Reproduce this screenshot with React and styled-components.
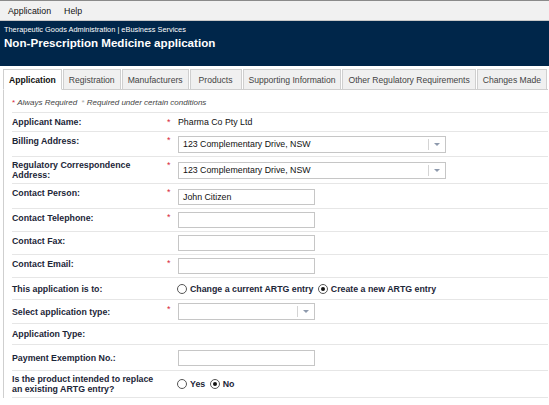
import React from 'react';
import styled, { createGlobalStyle } from 'styled-components';

const Global = createGlobalStyle`
  body {
    margin: 0;
    background: #fff;
    font-family: "Liberation Sans", Arial, sans-serif;
    font-size: 8.8px;
    color: #222;
  }
`

const MenuBar = styled.div`
  height: 19px;
  display: flex;
  align-items: center;
  gap: 13px;
  padding-left: 8px;
  background: #f1f1f1;
  border-top: 1px solid #8a8a8a;
  border-bottom: 1px solid #c8c8c8;
  color: #111;
`

const Header = styled.div`
  background: #00264a;
  color: #fff;
  height: 45px;
  padding: 4px 4px 0;
  box-sizing: border-box;
`

const SubTitle = styled.div`
  font-size: 7.4px;
  line-height: 9px;
`

const Title = styled.div`
  font-size: 11.6px;
  line-height: 14px;
  font-weight: bold;
  margin-top: 2px;
`

const Tabs = styled.div`
  display: flex;
  gap: 1px;
  padding: 3px 3px 0;
`

const Tab = styled.div`
  height: 19px;
  display: flex;
  align-items: center;
  white-space: nowrap;
  font-size: 8.6px;
  padding: 0 ${p => p.$pad || 5}px;
  border: 1px solid #cfcfcf;
  border-bottom-color: ${p => (p.$active ? '#fff' : '#cfcfcf')};
  background: ${p => (p.$active ? '#fff' : '#f0f0f0')};
  font-weight: ${p => (p.$active ? 'bold' : 'normal')};
  color: ${p => (p.$active ? '#111' : '#444')};
  margin-bottom: -1px;
  position: relative;
`

const Panel = styled.div`
  margin: 0 1px 0 3px;
  border-left: 1px solid #cfcfcf;
  border-top: 1px solid #cfcfcf;
  padding: 0 0 0 8px;
`

const Notes = styled.div`
  font-style: italic;
  font-size: 8px;
  line-height: 10px;
  color: #444;
  padding: 8px 0 4px 0;
  border-bottom: 1px solid #e6e6e6;
`

const Star = styled.span`
  color: ${p => (p.$soft ? '#aaa' : '#d8283c')};
  font-style: normal;
  margin-right: 2px;
`

const Row = styled.div`
  display: grid;
  grid-template-columns: 155px 11px 1fr;
  align-items: center;
  min-height: ${p => p.$h || 17}px;
  border-bottom: 1px solid #e6e6e6;
  padding: 3px 0;
`

const Label = styled.div`
  font-weight: bold;
  color: #1c2638;
  line-height: 10px;
  align-self: ${p => (p.$top ? 'start' : 'center')};
  padding-top: ${p => (p.$top ? 1 : 0)}px;
`

const Req = styled.div`
  color: #d8283c;
  font-size: 9px;
  line-height: 9px;
  align-self: start;
  padding-top: ${p => p.$off || 1}px;
`

const Value = styled.div`
  color: #111;
  display: flex;
  align-items: center;
  align-self: ${p => (p.$end ? 'end' : 'center')};
`

const TextBox = styled.div`
  width: ${p => p.$w || 137}px;
  height: 16px;
  box-sizing: border-box;
  border: 1px solid #c6c6c6;
  background: #fff;
  display: flex;
  align-items: center;
  padding-left: 4px;
  color: #111;
`

const SelectBox = styled.div`
  width: ${p => p.$w}px;
  height: 17px;
  box-sizing: border-box;
  border: 1px solid #c6c6c6;
  background: #fff;
  display: flex;
  align-items: center;
`

const SelectText = styled.div`
  flex: 1;
  padding-left: 4px;
  color: #111;
`

const Arrow = styled.div`
  width: 15px;
  height: 11px;
  border-left: 1px solid #d4d4d4;
  margin-right: 1px;
  display: flex;
  align-items: center;
  justify-content: center;
  &::after {
    content: '';
    border-left: 3px solid transparent;
    border-right: 3px solid transparent;
    border-top: 3px solid #8e9aad;
  }
`

const RadioGroup = styled.div`
  display: flex;
  align-items: center;
  gap: 2px;
  font-weight: bold;
  color: #1c2638;
  margin-left: -1px;
`

const Radio = styled.span`
  width: 8px;
  height: 8px;
  border: 1px solid #555;
  border-radius: 50%;
  display: inline-flex;
  align-items: center;
  justify-content: center;
  margin-right: 1px;
  &::after {
    content: '';
    width: 4px;
    height: 4px;
    border-radius: 50%;
    background: ${p => (p.$on ? '#111' : 'transparent')};
  }
`

const Select = ({ w, text }) => (
  <SelectBox $w={w}>
    <SelectText>{text}</SelectText>
    <Arrow />
  </SelectBox>
)

export default function App() {
  return (
    <>
      <Global />
      <MenuBar>
        <span>Application</span>
        <span>Help</span>
      </MenuBar>
      <Header>
        <SubTitle>Therapeutic Goods Administration | eBusiness Services</SubTitle>
        <Title>Non-Prescription Medicine application</Title>
      </Header>
      <Tabs>
        <Tab $active>Application</Tab>
        <Tab>Registration</Tab>
        <Tab>Manufacturers</Tab>
        <Tab $pad={8}>Products</Tab>
        <Tab>Supporting Information</Tab>
        <Tab>Other Regulatory Requirements</Tab>
        <Tab>Changes Made</Tab>
      </Tabs>
      <Panel>
        <Notes>
          <Star>*</Star>Always Required&nbsp;&nbsp;<Star $soft>*</Star>Required under certain conditions
        </Notes>
        <Row $h={12}>
          <Label>Applicant Name:</Label>
          <Req $off={2}>*</Req>
          <Value>Pharma Co Pty Ltd</Value>
        </Row>
        <Row $h={18}>
          <Label $top>Billing Address:</Label>
          <Req>*</Req>
          <Value>
            <Select w={268} text="123 Complementary Drive, NSW" />
          </Value>
        </Row>
        <Row $h={17}>
          <Label>
            Regulatory Correspondence
            <br />
            Address:
          </Label>
          <Req>*</Req>
          <Value>
            <Select w={268} text="123 Complementary Drive, NSW" />
          </Value>
        </Row>
        <Row $h={18}>
          <Label $top>Contact Person:</Label>
          <Req>*</Req>
          <Value $end>
            <TextBox>John Citizen</TextBox>
          </Value>
        </Row>
        <Row $h={16}>
          <Label $top>Contact Telephone:</Label>
          <Req>*</Req>
          <Value $end>
            <TextBox />
          </Value>
        </Row>
        <Row $h={16}>
          <Label $top>Contact Fax:</Label>
          <Req />
          <Value $end>
            <TextBox />
          </Value>
        </Row>
        <Row $h={16}>
          <Label $top>Contact Email:</Label>
          <Req>*</Req>
          <Value $end>
            <TextBox />
          </Value>
        </Row>
        <Row $h={15}>
          <Label>This application is to:</Label>
          <Req />
          <RadioGroup>
            <Radio />
            Change a current ARTG entry&nbsp;
            <Radio $on />
            Create a new ARTG entry
          </RadioGroup>
        </Row>
        <Row>
          <Label>Select application type:</Label>
          <Req $off={2}>*</Req>
          <Value>
            <Select w={137} text="" />
          </Value>
        </Row>
        <Row $h={14}>
          <Label>Application Type:</Label>
          <Req />
          <Value />
        </Row>
        <Row $h={19}>
          <Label>Payment Exemption No.:</Label>
          <Req />
          <Value>
            <TextBox />
          </Value>
        </Row>
        <Row $h={19}>
          <Label>
            Is the product intended to replace
            <br />
            an existing ARTG entry?
          </Label>
          <Req />
          <RadioGroup>
            <Radio />
            Yes&nbsp;
            <Radio $on />
            No
          </RadioGroup>
        </Row>
      </Panel>
    </>
  );
}
